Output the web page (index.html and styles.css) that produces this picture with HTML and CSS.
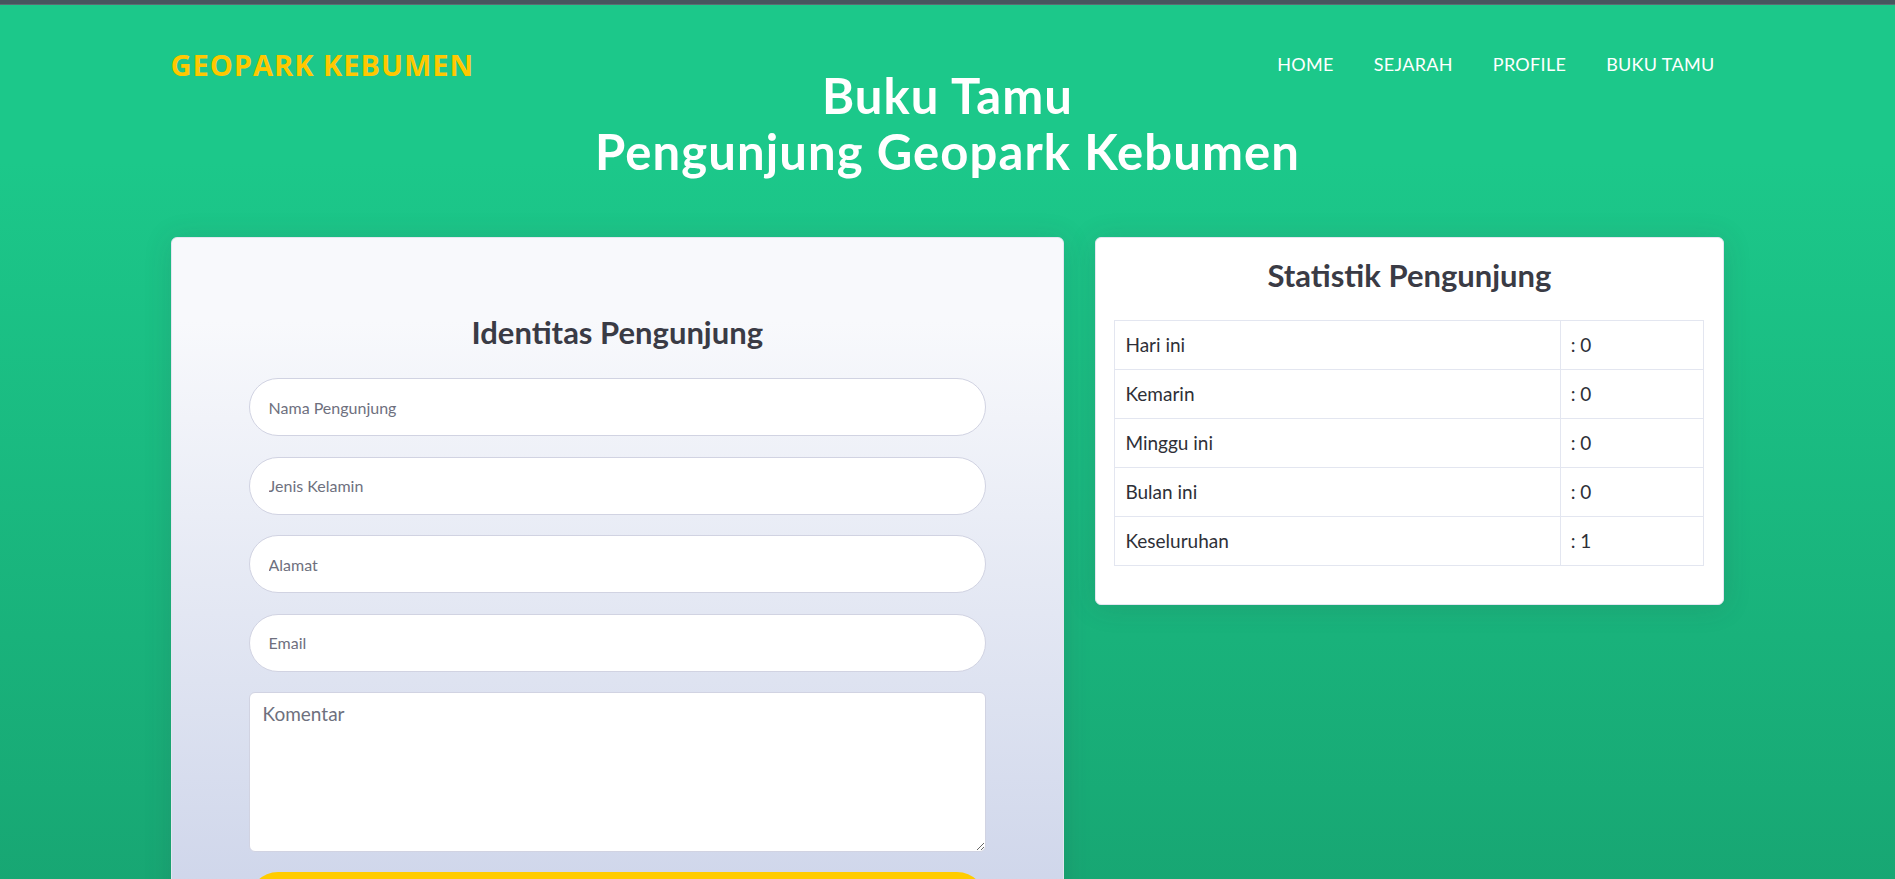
FILE: index.html
```html
<!DOCTYPE html>
<html lang="id">
<head>
<meta charset="utf-8">
<title>Buku Tamu - Geopark Kebumen</title>
<link rel="stylesheet" href="styles.css">
</head>
<body>
<div class="topbar"></div>
<div class="page">
  <header class="hero">
    <nav class="navbar">
      <a class="brand" href="#">GEOPARK KEBUMEN</a>
      <ul class="nav-links">
        <li><a href="#">HOME</a></li>
        <li><a href="#">SEJARAH</a></li>
        <li><a href="#">PROFILE</a></li>
        <li><a href="#">BUKU TAMU</a></li>
      </ul>
    </nav>
    <h1 class="hero-title">Buku Tamu<br>Pengunjung Geopark Kebumen</h1>
  </header>

  <main class="content">
    <section class="card card-form">
      <h2 class="card-title">Identitas Pengunjung</h2>
      <form class="guest-form">
        <input class="field" type="text" placeholder="Nama Pengunjung">
        <input class="field" type="text" placeholder="Jenis Kelamin">
        <input class="field" type="text" placeholder="Alamat">
        <input class="field" type="email" placeholder="Email">
        <textarea class="field-area" placeholder="Komentar"></textarea>
        <button class="btn-submit" type="button">Simpan</button>
      </form>
    </section>

    <section class="card card-stats">
      <h2 class="card-title">Statistik Pengunjung</h2>
      <table class="stats-table">
        <tr><td class="label">Hari ini</td><td>: 0</td></tr>
        <tr><td class="label">Kemarin</td><td>: 0</td></tr>
        <tr><td class="label">Minggu ini</td><td>: 0</td></tr>
        <tr><td class="label">Bulan ini</td><td>: 0</td></tr>
        <tr><td class="label">Keseluruhan</td><td>: 1</td></tr>
      </table>
    </section>
  </main>
</div>
</body>
</html>
```

FILE: styles.css
```css
* { box-sizing: border-box; }

html, body {
  margin: 0;
  padding: 0;
}

body {
  font-family: Lato, "Noto Sans", sans-serif;
  color: #3a3b45;
  background: #13855c;
}

.topbar {
  height: 5px;
  background: #47565e;
  border-bottom: 1px solid #5d6c72;
}

.page {
  padding: 0 9% 80px;
  min-height: 1300px;
  background: linear-gradient(180deg, #1cc88a 156px, #13855c 1603px);
}

/* header: navbar and title share one grid cell */
.hero {
  display: grid;
}

.hero > * {
  grid-area: 1 / 1;
}

.navbar {
  align-self: start;
  display: flex;
  justify-content: space-between;
  align-items: center;
  padding-top: 37.5px;
  line-height: 1.5;
  z-index: 1;
}

.brand {
  font-family: "Open Sans", "Noto Sans", sans-serif;
  font-weight: 700;
  font-size: 29px;
  letter-spacing: 1px;
  color: #ffc800;
  text-decoration: none;
}

.nav-links {
  list-style: none;
  margin: 0;
  padding: 0;
  display: flex;
  gap: 20px;
}

.nav-links a {
  display: block;
  padding: 0 10px;
  font-size: 18px;
  letter-spacing: 0.3px;
  color: #ffffff;
  text-decoration: none;
}

.hero-title {
  margin: 0;
  padding-top: 62px;
  text-align: center;
  font-size: 49px;
  line-height: 56px;
  letter-spacing: 1.1px;
  font-weight: 700;
  color: #ffffff;
}

/* content */
.content {
  margin-top: 58px;
  display: flex;
  justify-content: space-between;
  align-items: flex-start;
}

.card {
  border: 1px solid #e3e6f0;
  border-radius: 6px;
  box-shadow: 0 2px 28px 0 rgba(58, 59, 69, 0.15);
}

.card-title {
  margin: 0 0 28px;
  text-align: center;
  font-size: 31px;
  line-height: 36px;
  font-weight: 700;
  color: #3a3b45;
}

.card-form {
  width: 57.5%;
  padding: 76px 77px 140px;
  background: linear-gradient(180deg, #f8f9fc 10%, #c2cbe5 100%);
}

.guest-form {
  display: flex;
  flex-direction: column;
  gap: 20.5px;
}

.field {
  height: 58px;
  padding: 0 19px;
  border: 1px solid #d1d3e2;
  border-radius: 10rem;
  background: #ffffff;
  font-family: Lato, "Noto Sans", sans-serif;
  font-size: 16px;
  color: #6e707e;
  outline: none;
}

.field::placeholder,
.field-area::placeholder {
  color: #6e707e;
  opacity: 1;
}

.field-area {
  height: 159.5px;
  padding: 7px 13px;
  border: 1px solid #d1d3e2;
  border-radius: 6px;
  background: #ffffff;
  font-family: Lato, "Noto Sans", sans-serif;
  font-size: 19px;
  line-height: 1.5;
  color: #6e707e;
  outline: none;
  resize: vertical;
}

.btn-submit {
  height: 58px;
  border: none;
  border-radius: 10rem;
  background: #ffcc00;
  font-family: Lato, "Noto Sans", sans-serif;
  font-size: 18px;
  font-weight: 700;
  color: #3a3b45;
}

.card-stats {
  width: 40.48%;
  padding: 19px 19px 19px 18px;
  background: #ffffff;
}

.card-stats .card-title {
  margin-bottom: 27px;
}

.stats-table {
  width: 100%;
  border-collapse: collapse;
  margin-bottom: 19px;
  font-size: 19px;
  line-height: 28px;
  color: #2e2f37;
}

.stats-table td {
  padding: 10px 10px;
  border: 1px solid #e3e6f0;
}

.stats-table td.label {
  width: 75.6%;
}
```
